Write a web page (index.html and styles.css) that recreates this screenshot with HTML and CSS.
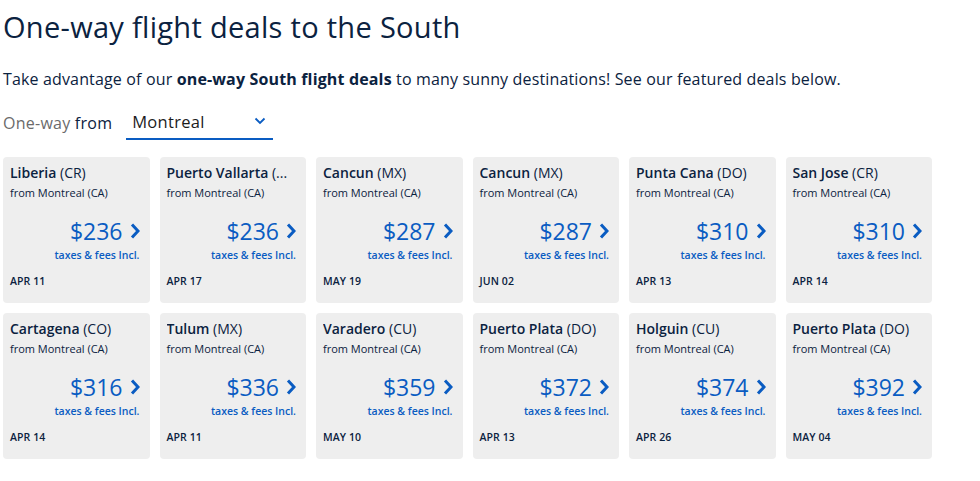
FILE: index.html
```html
<!DOCTYPE html>
<html lang="en">
<head>
<meta charset="utf-8">
<title>One-way flight deals to the South</title>
<link rel="stylesheet" href="styles.css">
</head>
<body>
<main class="page">
  <h1 class="title">One-way flight deals to the South</h1>
  <p class="intro">Take advantage of our <strong>one-way South flight deals</strong> to many sunny destinations! See our featured deals below.</p>
  <div class="filter">
    <span class="filter-label"><span class="muted">One-way</span> from</span>
    <div class="select">
      <span>Montreal</span>
      <svg class="select-chev" width="12" height="8" viewBox="0 0 12 8"><path d="M1.5 1.5 L6 6 L10.5 1.5" fill="none" stroke="#0a5cc2" stroke-width="1.8"/></svg>
    </div>
  </div>
  <div class="grid">
    <a class="card"><div class="dest"><b>Liberia</b> (CR)</div><div class="from">from Montreal (CA)</div><div class="price"><span>$236</span><svg class="chev" viewBox="0 0 10 16"><path d="M2 1.5 L8 8 L2 14.5" fill="none" stroke="#0a5cc2" stroke-width="3"/></svg></div><div class="taxes">taxes &amp; fees Incl.</div><div class="date">APR 11</div></a>
    <a class="card"><div class="dest"><b>Puerto Vallarta</b> (...</div><div class="from">from Montreal (CA)</div><div class="price"><span>$236</span><svg class="chev" viewBox="0 0 10 16"><path d="M2 1.5 L8 8 L2 14.5" fill="none" stroke="#0a5cc2" stroke-width="3"/></svg></div><div class="taxes">taxes &amp; fees Incl.</div><div class="date">APR 17</div></a>
    <a class="card"><div class="dest"><b>Cancun</b> (MX)</div><div class="from">from Montreal (CA)</div><div class="price"><span>$287</span><svg class="chev" viewBox="0 0 10 16"><path d="M2 1.5 L8 8 L2 14.5" fill="none" stroke="#0a5cc2" stroke-width="3"/></svg></div><div class="taxes">taxes &amp; fees Incl.</div><div class="date">MAY 19</div></a>
    <a class="card"><div class="dest"><b>Cancun</b> (MX)</div><div class="from">from Montreal (CA)</div><div class="price"><span>$287</span><svg class="chev" viewBox="0 0 10 16"><path d="M2 1.5 L8 8 L2 14.5" fill="none" stroke="#0a5cc2" stroke-width="3"/></svg></div><div class="taxes">taxes &amp; fees Incl.</div><div class="date">JUN 02</div></a>
    <a class="card"><div class="dest"><b>Punta Cana</b> (DO)</div><div class="from">from Montreal (CA)</div><div class="price"><span>$310</span><svg class="chev" viewBox="0 0 10 16"><path d="M2 1.5 L8 8 L2 14.5" fill="none" stroke="#0a5cc2" stroke-width="3"/></svg></div><div class="taxes">taxes &amp; fees Incl.</div><div class="date">APR 13</div></a>
    <a class="card"><div class="dest"><b>San Jose</b> (CR)</div><div class="from">from Montreal (CA)</div><div class="price"><span>$310</span><svg class="chev" viewBox="0 0 10 16"><path d="M2 1.5 L8 8 L2 14.5" fill="none" stroke="#0a5cc2" stroke-width="3"/></svg></div><div class="taxes">taxes &amp; fees Incl.</div><div class="date">APR 14</div></a>
    <a class="card"><div class="dest"><b>Cartagena</b> (CO)</div><div class="from">from Montreal (CA)</div><div class="price"><span>$316</span><svg class="chev" viewBox="0 0 10 16"><path d="M2 1.5 L8 8 L2 14.5" fill="none" stroke="#0a5cc2" stroke-width="3"/></svg></div><div class="taxes">taxes &amp; fees Incl.</div><div class="date">APR 14</div></a>
    <a class="card"><div class="dest"><b>Tulum</b> (MX)</div><div class="from">from Montreal (CA)</div><div class="price"><span>$336</span><svg class="chev" viewBox="0 0 10 16"><path d="M2 1.5 L8 8 L2 14.5" fill="none" stroke="#0a5cc2" stroke-width="3"/></svg></div><div class="taxes">taxes &amp; fees Incl.</div><div class="date">APR 11</div></a>
    <a class="card"><div class="dest"><b>Varadero</b> (CU)</div><div class="from">from Montreal (CA)</div><div class="price"><span>$359</span><svg class="chev" viewBox="0 0 10 16"><path d="M2 1.5 L8 8 L2 14.5" fill="none" stroke="#0a5cc2" stroke-width="3"/></svg></div><div class="taxes">taxes &amp; fees Incl.</div><div class="date">MAY 10</div></a>
    <a class="card"><div class="dest"><b>Puerto Plata</b> (DO)</div><div class="from">from Montreal (CA)</div><div class="price"><span>$372</span><svg class="chev" viewBox="0 0 10 16"><path d="M2 1.5 L8 8 L2 14.5" fill="none" stroke="#0a5cc2" stroke-width="3"/></svg></div><div class="taxes">taxes &amp; fees Incl.</div><div class="date">APR 13</div></a>
    <a class="card"><div class="dest"><b>Holguin</b> (CU)</div><div class="from">from Montreal (CA)</div><div class="price"><span>$374</span><svg class="chev" viewBox="0 0 10 16"><path d="M2 1.5 L8 8 L2 14.5" fill="none" stroke="#0a5cc2" stroke-width="3"/></svg></div><div class="taxes">taxes &amp; fees Incl.</div><div class="date">APR 26</div></a>
    <a class="card"><div class="dest"><b>Puerto Plata</b> (DO)</div><div class="from">from Montreal (CA)</div><div class="price"><span>$392</span><svg class="chev" viewBox="0 0 10 16"><path d="M2 1.5 L8 8 L2 14.5" fill="none" stroke="#0a5cc2" stroke-width="3"/></svg></div><div class="taxes">taxes &amp; fees Incl.</div><div class="date">MAY 04</div></a>
  </div>
</main>
</body>
</html>
```

FILE: styles.css
```css
* { box-sizing: border-box; }
html, body { margin: 0; padding: 0; background: #fff; }
body {
  font-family: "Open Sans", "Noto Sans", Arial, sans-serif;
  color: #0b2240;
}
.page {
  width: 932px;
  padding: 8px 0 0 3px;
}
.title {
  margin: 0;
  font-size: 29px;
  font-weight: 400;
  line-height: 38px;
  letter-spacing: 0.3px;
}
.intro {
  margin: 22px 0 0;
  font-size: 16px;
  line-height: 22px;
  letter-spacing: 0.15px;
}
.intro strong { font-weight: 700; }
.filter {
  display: flex;
  align-items: flex-start;
  gap: 14px;
  margin-top: 19px;
  height: 48px;
}
.filter-label {
  font-size: 16px;
  line-height: 22px;
  padding-top: 3px;
  letter-spacing: 0.25px;
  color: #0b2240;
}
.muted { color: #6b6b6b; }
.select {
  width: 147px;
  height: 31px;
  border-bottom: 2px solid #0a5cc2;
  display: flex;
  align-items: center;
  justify-content: space-between;
  padding: 0 7px 5px 6px;
  font-size: 16.5px;
  letter-spacing: 0.3px;
  color: #1c1c1c;
}
.grid {
  display: grid;
  grid-template-columns: repeat(6, 146.5px);
  gap: 10px;
}
.card {
  display: flex;
  flex-direction: column;
  height: 146px;
  background: #eeeeee;
  border-radius: 4px;
  padding: 6px 10px 0 7px;
  color: #0b2240;
}
.dest {
  font-size: 14px;
  line-height: 20px;
  white-space: nowrap;
  overflow: hidden;
}
.dest b { font-weight: 600; }
.from {
  font-size: 11px;
  line-height: 14px;
  margin-top: 3px;
}
.price {
  display: flex;
  justify-content: flex-end;
  align-items: center;
  gap: 7px;
  margin-top: 17px;
  font-size: 23px;
  line-height: 28px;
  color: #0a5cc2;
}
.chev { width: 10px; height: 16px; }
.taxes {
  text-align: right;
  font-size: 10.5px;
  font-weight: 600;
  color: #0a5cc2;
  line-height: 14px;
  margin-top: 3px;
}
.date {
  font-size: 10.5px;
  font-weight: 600;
  line-height: 14px;
  margin-top: 12px;
  letter-spacing: 0.1px;
}
```
